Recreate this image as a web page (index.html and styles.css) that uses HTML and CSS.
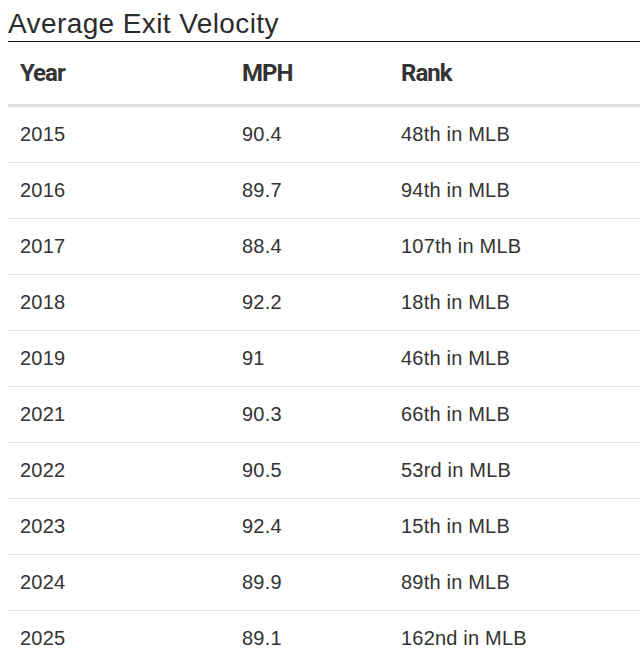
FILE: index.html
```html
<!DOCTYPE html>
<html lang="en">
<head>
<meta charset="utf-8">
<title>Average Exit Velocity</title>
<link rel="stylesheet" href="styles.css">
</head>
<body>
<section class="panel">
  <h2 class="panel-title">Average Exit Velocity</h2>
  <table class="stats">
    <thead>
      <tr><th class="c-year">Year</th><th class="c-mph">MPH</th><th class="c-rank">Rank</th></tr>
    </thead>
    <tbody>
      <tr><td>2015</td><td>90.4</td><td>48th in MLB</td></tr>
      <tr><td>2016</td><td>89.7</td><td>94th in MLB</td></tr>
      <tr><td>2017</td><td>88.4</td><td>107th in MLB</td></tr>
      <tr><td>2018</td><td>92.2</td><td>18th in MLB</td></tr>
      <tr><td>2019</td><td>91</td><td>46th in MLB</td></tr>
      <tr><td>2021</td><td>90.3</td><td>66th in MLB</td></tr>
      <tr><td>2022</td><td>90.5</td><td>53rd in MLB</td></tr>
      <tr><td>2023</td><td>92.4</td><td>15th in MLB</td></tr>
      <tr><td>2024</td><td>89.9</td><td>89th in MLB</td></tr>
      <tr><td>2025</td><td>89.1</td><td>162nd in MLB</td></tr>
    </tbody>
  </table>
</section>
</body>
</html>
```
FILE: styles.css
```css
html, body {
  background: #fff;
}
body {
  margin: 8px 0 0 8px;
  font-family: "Liberation Sans", Arial, sans-serif;
  color: #333;
  overflow: hidden;
}
.panel {
  width: 100%;
}
.panel-title {
  margin: 0;
  font-size: 28px;
  font-weight: 400;
  letter-spacing: 0.4px;
  line-height: 31px;
  padding-bottom: 2px;
  border-bottom: 1px solid #111;
  color: #2b2b2b;
}
.stats {
  width: 100%;
  border-collapse: collapse;
  table-layout: fixed;
}
.stats th {
  font-family: Roboto, "Liberation Sans", sans-serif;
  font-weight: 700;
  font-size: 24px;
  letter-spacing: -1px;
  text-align: left;
  height: 62px;
  padding: 0 12px;
  border-bottom: 3px solid #e0e0e0;
  color: #333;
}
.c-year { width: 198px; }
.c-mph { width: 135px; }
.stats td {
  font-size: 20px;
  letter-spacing: 0.2px;
  height: 55px;
  padding: 0 12px;
  border-bottom: 1px solid #e3e3e3;
  vertical-align: middle;
  white-space: nowrap;
}
```
